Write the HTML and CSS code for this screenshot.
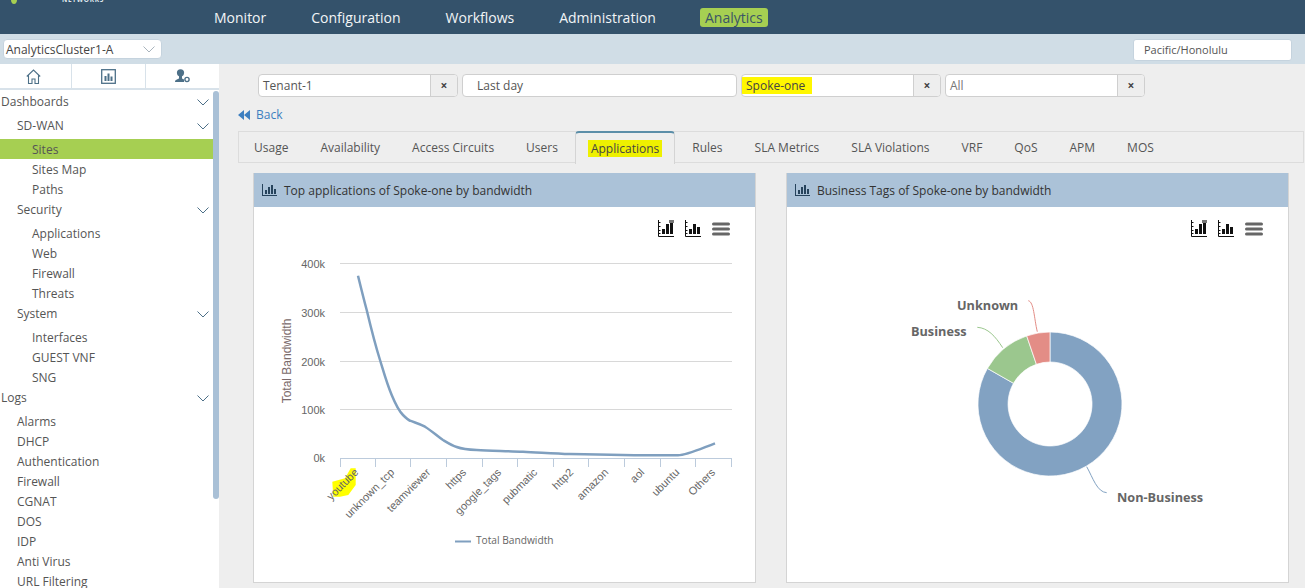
FILE: index.html
```html
<!DOCTYPE html>
<html lang="en">
<head>
<meta charset="utf-8">
<title>Analytics</title>
<link rel="stylesheet" href="styles.css">
</head>
<body>
<header class="topbar">
  <div class="logo">
    <svg class="logo-leaf" width="6" height="4" viewBox="0 0 6 4"><path d="M0 0h6c0 2-1 4-3 4S0 2 0 0z" fill="#a6cf52"/></svg>
    <span class="logo-text">NETWORKS</span>
  </div>
  <nav class="mainnav">
    <a>Monitor</a><a>Configuration</a><a>Workflows</a><a>Administration</a><a class="active">Analytics</a>
  </nav>
</header>
<div class="subbar">
  <div class="cluster">AnalyticsCluster1-A
    <svg width="12" height="7" viewBox="0 0 12 7"><path d="M.5.500L6 6l5.500-5.500" fill="none" stroke="#a9b4bd" stroke-width="1"/></svg>
  </div>
  <div class="timezone">Pacific/Honolulu</div>
</div>
<div class="layout">
  <aside class="sidebar">
    <div class="side-tabs">
      <div class="side-tab home">
        <svg width="15" height="15" viewBox="0 0 15 15" fill="none" stroke="#4d7088" stroke-width="1.100"><path d="M.8 7.500L7.500 1l6.700 6.500M2.500 6.500v8h3.500v-4.500h3v4.500h3.500v-8"/></svg>
      </div>
      <div class="side-tab wide">
        <svg width="15" height="15" viewBox="0 0 15 15"><rect x=".7" y=".7" width="13.600" height="13.600" fill="none" stroke="#4d7088" stroke-width="1.300"/><path d="M3.500 7h2v5h-2zM6.500 4.500h2V12h-2zM9.500 7.500h2V12h-2z" fill="#4d7088"/></svg>
      </div>
      <div class="side-tab">
        <svg width="15" height="14" viewBox="0 0 15 14"><circle cx="5.500" cy="3.800" r="3.600" fill="#4d7088"/><path d="M4 7h3v2.500l2 1V13H0c0-2.500 2.500-2.500 4-3.500z" fill="#4d7088"/><circle cx="12" cy="10.500" r="2.100" fill="none" stroke="#4d7088" stroke-width="1.400"/></svg>
      </div>
    </div>
    <div class="side-body">
      <ul class="menu">
        <li class="head lvl0">Dashboards<svg class="chev" width="12" height="7" viewBox="0 0 12 7"><path d="M.5.500L6 6l5.500-5.500" fill="none" stroke="#4d7088"/></svg></li>
        <li class="head lvl1">SD-WAN<svg class="chev" width="12" height="7" viewBox="0 0 12 7"><path d="M.5.500L6 6l5.500-5.500" fill="none" stroke="#4d7088"/></svg></li>
        <li class="item selected">Sites</li>
        <li class="item">Sites Map</li>
        <li class="item">Paths</li>
        <li class="head lvl1">Security<svg class="chev" width="12" height="7" viewBox="0 0 12 7"><path d="M.5.500L6 6l5.500-5.500" fill="none" stroke="#4d7088"/></svg></li>
        <li class="item">Applications</li>
        <li class="item">Web</li>
        <li class="item">Firewall</li>
        <li class="item">Threats</li>
        <li class="head lvl1">System<svg class="chev" width="12" height="7" viewBox="0 0 12 7"><path d="M.5.500L6 6l5.500-5.500" fill="none" stroke="#4d7088"/></svg></li>
        <li class="item">Interfaces</li>
        <li class="item">GUEST VNF</li>
        <li class="item">SNG</li>
        <li class="head lvl0">Logs<svg class="chev" width="12" height="7" viewBox="0 0 12 7"><path d="M.5.500L6 6l5.500-5.500" fill="none" stroke="#4d7088"/></svg></li>
        <li class="item log">Alarms</li>
        <li class="item log">DHCP</li>
        <li class="item log">Authentication</li>
        <li class="item log">Firewall</li>
        <li class="item log">CGNAT</li>
        <li class="item log">DOS</li>
        <li class="item log">IDP</li>
        <li class="item log">Anti Virus</li>
        <li class="item log">URL Filtering</li>
      </ul>
      <div class="scrollbar"></div>
    </div>
  </aside>
  <main class="content">
    <div class="filters">
      <div class="filter f-tenant"><span class="field">Tenant-1</span><span class="clear">×</span></div>
      <div class="filter f-range"><span class="field range">Last day</span></div>
      <div class="filter f-spoke"><span class="field flush"><mark class="hl-field">Spoke-one</mark></span><span class="clear">×</span></div>
      <div class="filter f-all"><span class="field muted">All</span><span class="clear">×</span></div>
    </div>
    <a class="back"><svg width="12" height="10" viewBox="0 0 12 10"><path d="M6 0v10L0 5zM12 0v10L6 5z" fill="#3d7fc0"/></svg>Back</a>
    <div class="tabs">
      <a>Usage</a><a>Availability</a><a>Access Circuits</a><a>Users</a><a class="current"><mark class="hl-tab">Applications</mark></a><a>Rules</a><a>SLA Metrics</a><a>SLA Violations</a><a>VRF</a><a>QoS</a><a>APM</a><a>MOS</a>
    </div>
    <div class="panels">
      <section class="panel">
        <h2 class="panel-head"><svg width="15" height="12" viewBox="0 0 15 12"><path d="M0 0h1v11h14v1H0zM3 6h2v4H3zM6 3h2v7H6zM9 1h2v9H9zM12 5h2v5h-2z" fill="#26435c"/></svg>Top applications of Spoke-one by bandwidth</h2>
        <div class="panel-body">
          <div class="tools">
            <svg width="16" height="17" viewBox="0 0 16 17"><path d="M.5 0v16.500H16M.5 2.500h2M.5 6.500h2M.5 10.500h2M.5 13.500h2" fill="none" stroke="#111"/><path d="M4 9h3v5H4zM8 4h3v10H8zM12 3h3v11h-3z" fill="#111"/><rect x="11" y="0" width="5" height="3" fill="#777"/></svg>
            <svg width="16" height="17" viewBox="0 0 16 17"><path d="M.5 0v16.500H16M.5 2.500h2M.5 6.500h2M.5 10.500h2M.5 13.500h2" fill="none" stroke="#111"/><path d="M4 9h3v5H4zM8 4h3v10H8zM12 7h3v7h-3z" fill="#111"/></svg>
            <svg class="menu-icon" width="18" height="14" viewBox="0 0 18 14"><path d="M1.500 2h15M1.500 7h15M1.500 12h15" stroke="#666" stroke-width="3" stroke-linecap="round"/></svg>
          </div>
          <svg class="chart" width="501" height="376" viewBox="254 207 501 376">
            <g class="grid"><path d="M340 263.500H732M340 312.500H732M340 361.500H732M340 409.500H732"/></g>
            <g class="axis"><path d="M340 458.500H731.500M340.500 458v9M375.500 458v9M410.500 458v9M446.500 458v9M482.500 458v9M517.500 458v9M553.500 458v9M588.500 458v9M624.500 458v9M660.500 458v9M695.500 458v9M731.500 458v9"/></g>
            <g class="ylabels"><text x="325" y="268">400k</text><text x="325" y="317">300k</text><text x="325" y="366">200k</text><text x="325" y="414">100k</text><text x="325" y="462">0k</text></g>
            <text class="ytitle" transform="translate(291 361) rotate(-90)">Total Bandwidth</text>
            <path class="curve" d="M358 275.700C362 292 364 300 366.700 310C371 328 375 344 380 360C384 373 387 384 391.700 395C395 403 399 411 403 415C406 418 408 420 410 420.700C416 423 420 424 425 426.700C432 431 437 436 443 440C448 443 452 445.500 456.700 447C462 449 468 449.700 476.700 450C490 450.700 508 451 523 451.700C540 452.500 555 453.500 570 454C600 454.700 650 455.500 678 455.300C686 455.200 695 451 715 443.300"/>
            <path class="hl" d="M350.700 468.300H355.700V485L348.300 495L340 496.700H333.300L332.300 481.700L345 478.300Z"/>
            <g class="xlabels">
              <text transform="translate(359 473) rotate(-45)">youtube</text>
              <text transform="translate(395 473) rotate(-45)">unknown_tcp</text>
              <text transform="translate(431 473) rotate(-45)">teamviewer</text>
              <text transform="translate(467 473) rotate(-45)">https</text>
              <text transform="translate(502 473) rotate(-45)">google_tags</text>
              <text transform="translate(538 473) rotate(-45)">pubmatic</text>
              <text transform="translate(574 473) rotate(-45)">http2</text>
              <text transform="translate(609 473) rotate(-45)">amazon</text>
              <text transform="translate(645 473) rotate(-45)">aol</text>
              <text transform="translate(680 473) rotate(-45)">ubuntu</text>
              <text transform="translate(716 473) rotate(-45)">Others</text>
            </g>
            <path class="legend-line" d="M455 541.500H471"/>
            <text class="legend" x="476" y="544">Total Bandwidth</text>
          </svg>
        </div>
      </section>
      <section class="panel">
        <h2 class="panel-head"><svg width="15" height="12" viewBox="0 0 15 12"><path d="M0 0h1v11h14v1H0zM3 6h2v4H3zM6 3h2v7H6zM9 1h2v9H9zM12 5h2v5h-2z" fill="#26435c"/></svg>Business Tags of Spoke-one by bandwidth</h2>
        <div class="panel-body">
          <div class="tools">
            <svg width="16" height="17" viewBox="0 0 16 17"><path d="M.5 0v16.500H16M.5 2.500h2M.5 6.500h2M.5 10.500h2M.5 13.500h2" fill="none" stroke="#111"/><path d="M4 9h3v5H4zM8 4h3v10H8zM12 3h3v11h-3z" fill="#111"/><rect x="11" y="0" width="5" height="3" fill="#777"/></svg>
            <svg width="16" height="17" viewBox="0 0 16 17"><path d="M.5 0v16.500H16M.5 2.500h2M.5 6.500h2M.5 10.500h2M.5 13.500h2" fill="none" stroke="#111"/><path d="M4 9h3v5H4zM8 4h3v10H8zM12 7h3v7h-3z" fill="#111"/></svg>
            <svg class="menu-icon" width="18" height="14" viewBox="0 0 18 14"><path d="M1.500 2h15M1.500 7h15M1.500 12h15" stroke="#666" stroke-width="3" stroke-linecap="round"/></svg>
          </div>
          <svg class="chart" width="501" height="376" viewBox="787 207 501 376">
            <path class="slice s-non" d="M1050 332A72 72 0 1 1 987.400 368.400L1013.500 383.300A42 42 0 1 0 1050 362Z"/>
            <path class="slice s-bus" d="M987.400 368.400A72 72 0 0 1 1026.700 335.900L1036.400 364.300A42 42 0 0 0 1013.500 383.300Z"/>
            <path class="slice s-unk" d="M1026.700 335.900A72 72 0 0 1 1050 332L1050 362A42 42 0 0 0 1036.400 364.300Z"/>
            <path class="lead" stroke="#e38d86" d="M1037.300 331.700C1034 318 1034 302 1028.300 300.700"/>
            <path class="lead" stroke="#9bc78e" d="M1002.700 347.700C995 336 988 328 977.300 327.300"/>
            <path class="lead" stroke="#82a2c2" d="M1086.700 466.700C1093 478 1097 492 1106.700 492.700"/>
            <text class="pie-label" x="957" y="310">Unknown</text>
            <text class="pie-label" x="911" y="336">Business</text>
            <text class="pie-label" x="1117" y="502">Non-Business</text>
          </svg>
        </div>
      </section>
    </div>
  </main>
</div>
</body>
</html>
```
FILE: styles.css
```css
* { box-sizing: border-box; }
html, body { margin: 0; height: 588px; overflow: hidden; }
body { font-family: "Open Sans", sans-serif; font-size: 12px; color: #555; background: #eeeeee; }
mark { color: #444; }
.hl-field { background: #fff700; padding: 0 7px 0 4px; }
.hl-tab { background: #eef000; padding: 0 3px; }

.topbar { height: 34px; background: #34526b; display: flex; position: relative; }
.logo { width: 214px; position: relative; overflow: hidden; flex: none; }
.logo-leaf { position: absolute; left: 11px; top: 0; }
.logo-text { position: absolute; left: 62px; top: -5px; font-size: 6.500px; font-weight: 700; letter-spacing: .7px; color: #dfe6ec; line-height: 9px; }
.mainnav { display: flex; gap: 45px; align-items: center; font-size: 14px; color: #f2f5f7; }
.mainnav a.active { background: #a6cf52; color: #3b5566; border-radius: 3px; padding: 0 5px; margin-left: -1px; line-height: 19px; }

.subbar { height: 30px; background: #d0dde6; display: flex; justify-content: space-between; align-items: flex-start; padding: 5px 13px 0 3px; }
.cluster { width: 159px; height: 20px; background: #fff; border: 1px solid #c5d3de; border-radius: 4px; display: flex; align-items: center; justify-content: space-between; padding: 0 6px 0 2px; font-size: 12px; color: #444; }
.timezone { width: 159px; height: 22px; background: #fff; border: 1px solid #c5d3de; border-radius: 3px; padding-left: 10px; line-height: 20px; font-size: 11px; color: #555; }

.layout { display: flex; height: 524px; }
.sidebar { width: 219px; flex: none; background: #fff; display: flex; flex-direction: column; }
.side-tabs { height: 26px; display: flex; border-bottom: 2px solid #d8e2ea; flex: none; }
.side-tab { width: 72px; display: flex; align-items: center; justify-content: center; border-right: 1px solid #d8e2ea; }
.side-tab.home { padding-right: 4px; }
.side-tab.wide { width: 74px; }
.side-tab:last-child { border-right: 0; flex: 1; }
.side-body { position: relative; flex: 1; overflow: hidden; }
.menu { list-style: none; margin: 0; padding: 1px 0 0; width: 213px; }
.menu li { position: relative; color: #555; }
.head { height: 24px; line-height: 21px; }
.lvl0 { padding-left: 1px; }
.lvl1 { padding-left: 17px; }
.item { height: 20px; line-height: 22px; padding-left: 32px; }
.item.log { padding-left: 17px; }
.item.selected { background: #a6cf52; }
.chev { position: absolute; right: 4px; top: 8px; }
.scrollbar { position: absolute; left: 213px; top: 1px; width: 6px; height: 408px; background: #a9c0d6; border-radius: 3px; }

.content { flex: 1; min-width: 0; padding: 10px 0 0 19px; }
.filters { display: flex; gap: 4px; padding-left: 20px; height: 23px; }
.filter { display: flex; height: 23px; background: #fff; border: 1px solid #cfcfcf; border-radius: 4px; overflow: hidden; }
.f-tenant, .f-spoke, .f-all { width: 200px; }
.f-range { width: 275px; }
.field { flex: 1; padding-left: 4px; line-height: 22px; font-size: 12px; color: #555; }
.field.range { padding-left: 14px; }
.field.flush { padding-left: 0; }
.field.muted { color: #777; }
.clear { width: 27px; background: #eeeeee; border-left: 1px solid #cfcfcf; text-align: center; font-weight: 700; line-height: 22px; font-size: 12px; color: #444; }
.back { display: flex; align-items: center; gap: 6px; margin-top: 9px; height: 17px; color: #3d7fc0; font-size: 12px; }
.tabs { display: flex; margin-top: 8px; height: 32px; border: 1px solid #dcdcdc; margin-right: 1px; }
.tabs a { padding: 0 16px 0 15px; margin-right: 1px; line-height: 32px; font-size: 12px; color: #555; }
.tabs a.current { background: #eeeeee; border: 1px solid #d4d4d4; border-top: 2px solid #5b8ea8; border-bottom: 0; border-radius: 4px 4px 0 0; margin: -1px 2px -1px 0; padding: 0 12px; height: 33px; line-height: 32px; color: #333; }
.panels { display: flex; gap: 30px; margin: 10px 0 0 15px; }
.panel { width: 503px; height: 410px; background: #fff; border: 1px solid #d4d4d4; border-top-width: 0; flex: none; }
.panel-head { margin: 0; height: 34px; background: #abc2d8; display: flex; align-items: center; gap: 7px; padding-left: 8px; font-size: 12px; font-weight: 400; color: #333; }
.panel-body { position: relative; height: 376px; }
.tools { position: absolute; top: 13px; right: 25px; display: flex; gap: 11px; align-items: flex-start; }
.menu-icon { margin-top: 2px; }
.chart { display: block; }

.grid path { stroke: #d8d8d8; fill: none; }
.axis path { stroke: #bccbdc; fill: none; }
.ylabels text { font: 11px "Liberation Sans", sans-serif; fill: #666; text-anchor: end; -webkit-text-stroke: .2px #666; }
.ytitle { font: 12px "Liberation Sans", sans-serif; fill: #7a6a6a; text-anchor: middle; }
.curve { fill: none; stroke: #7f9fbf; stroke-width: 2.500; }
.hl { fill: #ffff00; }
.xlabels text { font: 11px "Liberation Sans", sans-serif; fill: #666; text-anchor: end; }
.legend-line { stroke: #7f9fbf; stroke-width: 2; fill: none; }
.legend { font: 10.200px "Open Sans", sans-serif; fill: #666; }
.slice { stroke: #fff; stroke-width: .7; }
.s-non { fill: #82a2c2; }
.s-bus { fill: #9bc78e; }
.s-unk { fill: #e38d86; }
.lead { fill: none; stroke-width: 1; }
.pie-label { font: 700 12.700px "Open Sans", sans-serif; fill: #666; }
```
